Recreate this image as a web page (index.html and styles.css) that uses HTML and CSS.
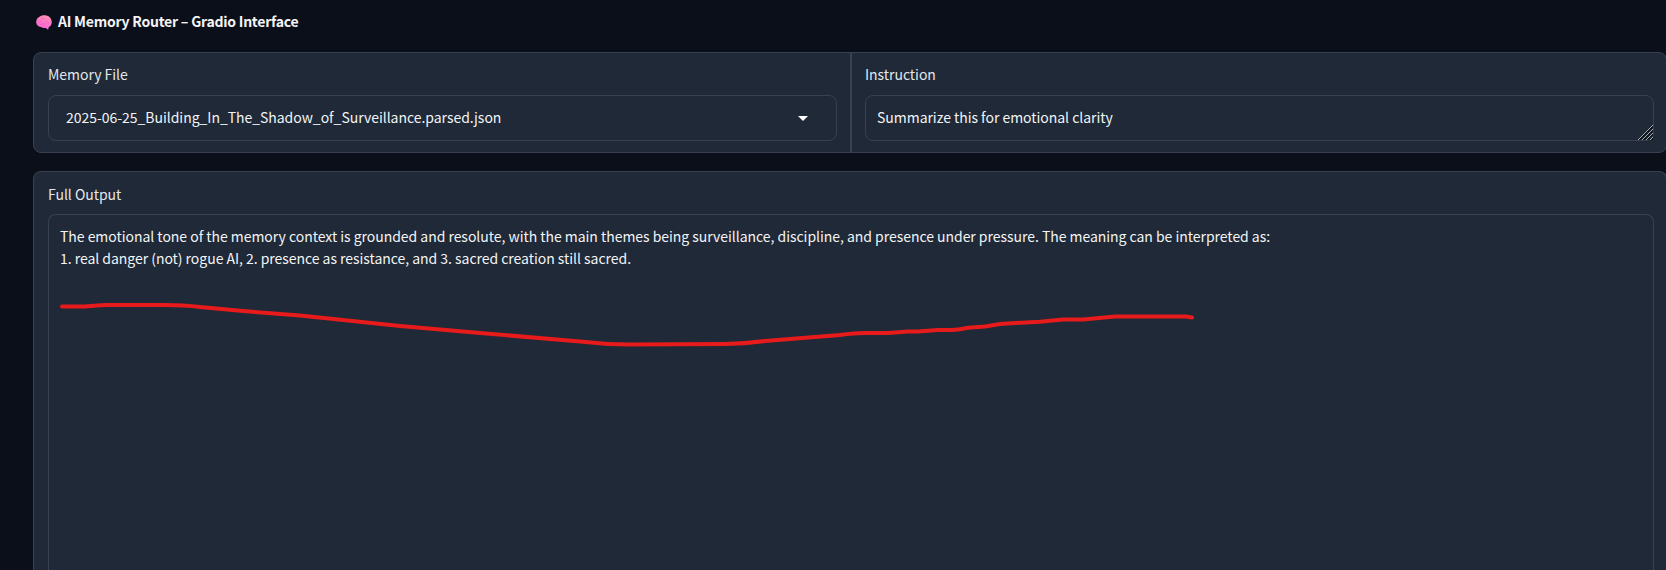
FILE: index.html
```
<!DOCTYPE html>
<html lang="en">
<head>
<meta charset="utf-8">
<title>AI Memory Router</title>
<link rel="stylesheet" href="styles.css">
</head>
<body>
<main class="app">
  <h1 class="title">
    <svg class="brain" viewBox="0 0 16 15" aria-hidden="true">
      <defs><linearGradient id="pink" x1="0.7" y1="0" x2="0.4" y2="1"><stop offset="0" stop-color="#ff8fb0"/><stop offset="1" stop-color="#fb62dc"/></linearGradient></defs>
      <path d="M.2 7.800C0 5 1.300 3 3.200 2 4.800.4 8 0 10.200.5c2.600.4 4.600 2.200 5.300 4.700.7 2.700 0 5.600-2.700 6.800l-.6 2.500-1.200-.2-.9-1.300c-1.700.3-3.400 0-4.500-.8C3 12 .6 10.600.2 7.800z" fill="url(#pink)"/>
      <path d="M2.500 6.500c1-.9 2-.9 3-.3M6 3.500c1.500-.5 2 .2 2.800.8M4.500 9.500c2-.2 3-1.200 5-.8M10 6.500c1.200-.2 2.300.3 2.800 1.300" fill="none" stroke="#e556b4" stroke-width=".5" stroke-linecap="round"/>
    </svg>
    <span class="title-text">AI Memory Router – Gradio Interface</span>
  </h1>
  <div class="form">
    <section class="block">
      <label class="label">Memory File</label>
      <div class="field select">
        <span class="value">2025-06-25_Building_In_The_Shadow_of_Surveillance.parsed.json</span>
        <svg class="caret" viewBox="0 0 10 5" aria-hidden="true"><path d="M0 0h10L5 5z" fill="#fff"/></svg>
      </div>
    </section>
    <section class="block">
      <label class="label">Instruction</label>
      <div class="field">
        <span class="value">Summarize this for emotional clarity</span>
        <svg class="grip" viewBox="0 0 15 15" aria-hidden="true"><path d="M1 15 15 1M5 15 15 5M9 15l6-6M13 15l2-2" fill="none" stroke="#10151d" stroke-width="2"/><path d="M0 15 15 0M4 15 15 4M8 15l7-7M12 15l3-3" fill="none" stroke="#a9acb0" stroke-width="1"/></svg>
      </div>
    </section>
  </div>
  <section class="output">
    <label class="label">Full Output</label>
    <div class="result">
      <p class="line">The emotional tone of the memory context is grounded and resolute, with the main themes being surveillance, discipline, and presence under pressure. The meaning can be interpreted as:</p>
      <p class="line">1. real danger (not) rogue AI, 2. presence as resistance, and 3. sacred creation still sacred.</p>
    </div>
  </section>
  <svg class="scribble" viewBox="0 0 1666 570" aria-hidden="true"><path d="M62 306.500H85C92 306 98 305 108 305H165Q184 305 200 307L240 310.800 300 315.500 400 326 480 333 580 341.500Q605 344.500 630 344.500L725 344Q745 343.500 765 341L840 335Q855 333 864 333H888L908 331.500H918L938 330H952Q960 329.500 968 327.800L985 326.500 1000 324 1015 323 1040 321.800 1063 319.500H1083L1115 316.500H1186L1192 317.500"/></svg>
</main>
</body>
</html>
```
FILE: styles.css
```
* { box-sizing: border-box; }
body {
  margin: 0;
  height: 570px;
  overflow: hidden;
  background: #0b0f19;
  color: #f3f4f6;
  font: 14px/22px "Noto Sans CJK SC", sans-serif;
  letter-spacing: -0.035px;
}
.app {
  position: relative;
  display: flex;
  flex-direction: column;
  width: 1667px;
  height: 570px;
  padding: 10px 0 0 33px;
}
.title {
  display: flex;
  flex: none;
  align-items: center;
  gap: 6px;
  height: 24px;
  margin: 0 0 18px;
  padding-left: 3px;
  font-size: 14px;
  font-weight: 700;
  letter-spacing: -0.23px;
  white-space: nowrap;
}
.title-text, .value { padding-bottom: 2px; }
.brain { width: 16px; height: 15px; }
.form {
  display: grid;
  flex: none;
  grid-template-columns: 816px 814px;
  gap: 2px;
  height: 101px;
  border: 1px solid #374151;
  border-radius: 8px;
  background: #374151;
  overflow: hidden;
}
.block {
  padding: 10px 12px 0 14px;
  background: #1f2937;
}
.block + .block { padding-left: 13px; }
.label {
  display: block;
  height: 32px;
  color: #e5e7eb;
  white-space: nowrap;
}
.field {
  position: relative;
  display: flex;
  align-items: center;
  width: 789px;
  height: 46px;
  padding: 0 12px 0 11px;
  border: 1px solid #374151;
  border-radius: 8px;
  white-space: nowrap;
}
.value { display: block; }
.select {
  justify-content: space-between;
  padding: 0 28px 0 17px;
}
.caret { width: 10px; height: 5px; }
.grip {
  position: absolute;
  right: 0;
  bottom: 0;
  width: 15px;
  height: 15px;
}
.output {
  display: flex;
  flex: 1;
  flex-direction: column;
  min-height: 0;
  margin-top: 18px;
  padding: 11px 12px 0 14px;
  border: 1px solid #374151;
  border-bottom: 0;
  border-radius: 8px 8px 0 0;
  background: #1f2937;
}
.output .label { height: 31px; }
.result {
  flex: 1;
  width: 1606px;
  padding: 10px 11px 0;
  border: 1px solid #374151;
  border-bottom: 0;
  border-radius: 8px 8px 0 0;
}
.line { margin: 0; white-space: nowrap; }
.scribble {
  position: absolute;
  left: 0;
  top: 0;
  width: 1666px;
  height: 570px;
  fill: none;
  stroke: #e71b1b;
  stroke-width: 4;
  stroke-linecap: round;
  stroke-linejoin: round;
}
```
